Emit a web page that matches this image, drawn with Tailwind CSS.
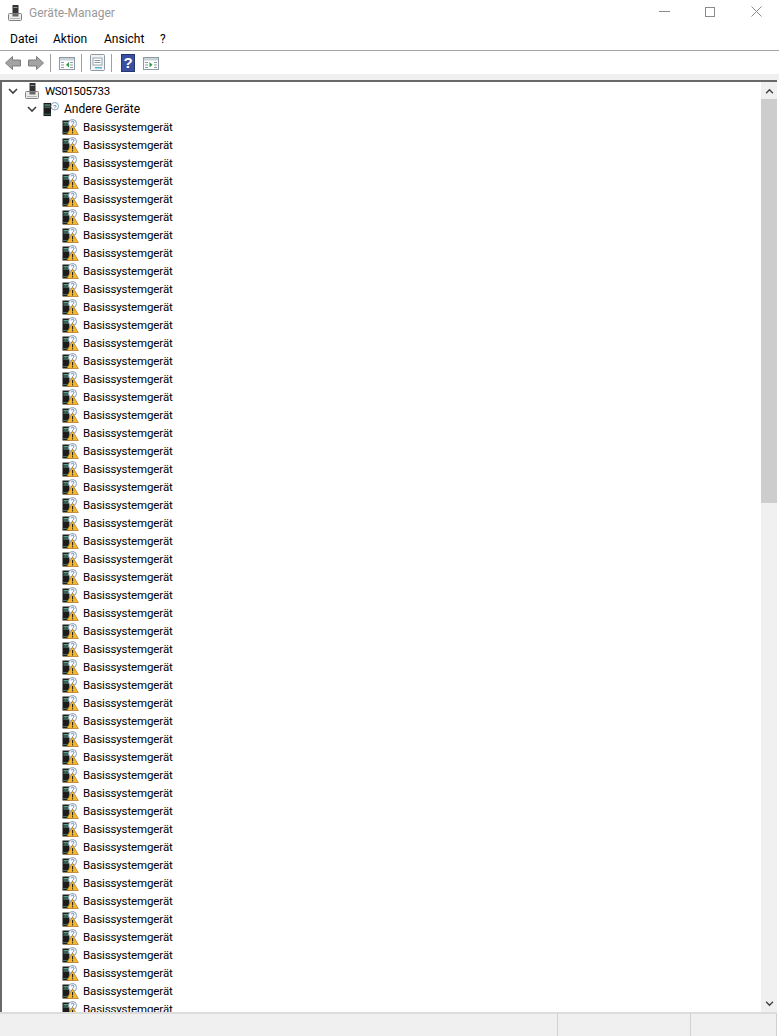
<!DOCTYPE html>
<html lang="de">
<head>
<meta charset="utf-8">
<title>Geräte-Manager</title>
<script src="https://cdn.jsdelivr.net/npm/@tailwindcss/browser@4"></script>
</head>
<body class="bg-white text-black overflow-hidden">

<svg class="hidden" width="0" height="0">
  <symbol id="pc" viewBox="0 0 14 16">
    <rect x="4.500" y="0" width="6" height="9" fill="#333"/>
    <rect x="5.500" y="2" width="4" height="1" fill="#999"/>
    <rect x="0.500" y="8.500" width="13" height="7" rx="1" fill="#ececec" stroke="#808080"/>
    <rect x="4.500" y="9" width="6" height="2.500" fill="#666"/>
    <rect x="2" y="13" width="10" height="1" fill="#b5b5b5"/>
  </symbol>
  <symbol id="other" viewBox="0 0 18 16">
    <rect x="0.500" y="1" width="8" height="14" fill="#1c1c1c"/>
    <rect x="1.500" y="2.500" width="6" height="1.500" fill="#5b9c84"/>
    <rect x="1.500" y="5" width="6" height="1" fill="#5b9c84"/>
    <rect x="0.500" y="12.500" width="8" height="1" fill="#3d6f5e"/>
    <circle cx="12.500" cy="4.500" r="4" fill="#fff" stroke="#7d9cb8"/>
    <text x="12.500" y="7" font-size="6.500" text-anchor="middle" fill="#3f6f9f" font-family="Liberation Sans">?</text>
  </symbol>
  <symbol id="warn" viewBox="0 0 17 16">
    <rect x="0.500" y="1.500" width="7" height="14" fill="#1c1c1c"/>
    <rect x="1.500" y="3" width="5" height="1.500" fill="#5b9c84"/>
    <rect x="1.500" y="5.500" width="5" height="1" fill="#5b9c84"/>
    <rect x="0.500" y="13" width="5" height="1" fill="#3d6f5e"/>
    <circle cx="10.500" cy="4.500" r="4" fill="#fff" stroke="#7d9cb8"/>
    <path d="M9.300 3.300a1.300 1.300 0 1 1 1.900 1.300l-.6.6v.7" fill="none" stroke="#3f6f9f" stroke-width=".9"/>
    <path d="M10.500 6L16.300 15.500H4.700Z" fill="#f5b82e" stroke="#a8701a" stroke-width=".7"/>
    <rect x="10" y="9" width="1.100" height="3.400" fill="#222"/>
    <rect x="10" y="13.200" width="1.100" height="1.200" fill="#222"/>
  </symbol>
  <symbol id="chev" viewBox="0 0 10 7">
    <path d="M1 1l4 4 4-4" fill="none" stroke="#404040" stroke-width="1.600"/>
  </symbol>
  <symbol id="pane" viewBox="0 0 16 13">
    <rect x="0.500" y="0.500" width="15" height="12" fill="#fff" stroke="#8d99a3"/>
    <rect x="1" y="1" width="14" height="2.500" fill="#c9d2d9"/>
    <rect x="2" y="5" width="3" height="1" fill="#8d99a3"/>
    <rect x="2" y="7.500" width="3" height="1" fill="#8d99a3"/>
    <rect x="2" y="10" width="3" height="1" fill="#8d99a3"/>
    <rect x="11" y="5" width="3" height="1" fill="#8d99a3"/>
    <rect x="11" y="7.500" width="3" height="1" fill="#8d99a3"/>
    <rect x="11" y="10" width="3" height="1" fill="#8d99a3"/>
  </symbol>
</svg>

<div class="h-[1036px] w-[779px] flex flex-col font-['Roboto',sans-serif] text-[12px] leading-[18px]">

  <!-- titlebar -->
  <div class="h-[27px] flex items-center shrink-0">
    <svg class="ml-[8px] w-[14px] h-[16px] mb-[2px]" viewBox="0 0 14 16"><use href="#pc"/></svg>
    <span class="ml-[7px] mb-[2px] text-[#999]">Geräte-Manager</span>
    <div class="ml-auto flex items-center mb-[4px]">
      <div class="w-[11px] h-px bg-[#8a8a8a] mr-[35px]"></div>
      <div class="w-[10px] h-[10px] border border-[#8a8a8a] mr-[36px]"></div>
      <svg class="w-[11px] h-[11px] mr-[17px]" viewBox="0 0 11 11"><path d="M.5.5l10 10M10.500.5l-10 10" stroke="#8a8a8a" fill="none"/></svg>
    </div>
  </div>

  <!-- menu -->
  <div class="h-[23px] flex items-center pl-[10px] shrink-0 border-b border-[#a5a5a5] box-content">
    <span class="w-[43px]">Datei</span><span class="w-[51px]">Aktion</span><span class="w-[56px]">Ansicht</span><span>?</span>
  </div>

  <!-- toolbar -->
  <div class="h-[23px] flex items-center shrink-0 pl-[5px]">
    <svg class="w-[16px] h-[14px]" viewBox="0 0 16 14"><path d="M.5 7L7.500.5V4H15.500V10H7.500V13.500Z" fill="#a3a3a3" stroke="#7c7c7c"/></svg>
    <svg class="ml-[7px] w-[16px] h-[14px]" viewBox="0 0 16 14"><path d="M15.500 7L8.500.5V4H.5V10H8.500V13.500Z" fill="#a3a3a3" stroke="#7c7c7c"/></svg>
    <div class="ml-[6px] w-px h-[18px] bg-[#a0a0a0]"></div>
    <svg class="ml-[8px] w-[16px] h-[13px] mt-[2px]" viewBox="0 0 16 13"><use href="#pane"/><path d="M10 5v5.500L7 7.800Z" fill="#2f9e44"/></svg>
    <div class="ml-[6px] w-px h-[18px] bg-[#a0a0a0]"></div>
    <svg class="ml-[8px] w-[15px] h-[17px]" viewBox="0 0 15 17">
      <rect x="0.500" y="0.500" width="14" height="16" rx="1" fill="#f1f3f4" stroke="#8d99a3"/>
      <rect x="3" y="4" width="9" height="7" fill="#fff" stroke="#9aa5ad"/>
      <rect x="4.500" y="6" width="6" height="1" fill="#8d99a3"/>
      <rect x="4.500" y="8" width="6" height="1" fill="#8d99a3"/>
      <rect x="5" y="13" width="7" height="1.500" fill="#59b7d6"/>
    </svg>
    <div class="ml-[6px] w-px h-[18px] bg-[#a0a0a0]"></div>
    <div class="ml-[9px] w-[14px] h-[18px] bg-[#3a4fa0] border border-[#26366e] flex items-center justify-center text-white font-bold text-[15px] font-['Liberation_Sans',sans-serif]">?</div>
    <svg class="ml-[8px] w-[16px] h-[13px] mt-[2px]" viewBox="0 0 16 13"><use href="#pane"/><path d="M6.500 5v5.500l3-2.700Z" fill="#2f9e44"/></svg>
  </div>

  <!-- light strip above tree -->
  <div class="h-[6px] bg-[#f0f0f0] shrink-0"></div>

  <!-- tree + scrollbar -->
  <div class="flex-1 min-h-0 flex mr-[2px] border-t-2 border-l-2 border-[#696969] relative">
    <div id="tree" class="flex-1 min-w-0 overflow-hidden bg-white">
      <div class="h-[18px] flex items-center">
        <svg class="ml-[6px] w-[10px] h-[7px]" viewBox="0 0 10 7"><use href="#chev"/></svg>
        <svg class="ml-[7px] w-[14px] h-[16px]" viewBox="0 0 14 16"><use href="#pc"/></svg>
        <span class="ml-[6px] text-[11.5px] tracking-[-0.4px]">WS01505733</span>
      </div>
      <div class="h-[18px] flex items-center">
        <svg class="ml-[25px] w-[10px] h-[7px]" viewBox="0 0 10 7"><use href="#chev"/></svg>
        <svg class="ml-[6px] w-[17px] h-[15px]" viewBox="0 0 18 16"><use href="#other"/></svg>
        <span class="ml-[4px]">Andere Geräte</span>
      </div>
      <div id="rows"></div>
    </div>
    <div class="w-[16px] shrink-0 bg-[#f0f0f0] flex flex-col items-center">
      <div class="h-[17px] shrink-0 flex items-center justify-center">
        <svg class="w-[9px] h-[6px] rotate-180" viewBox="0 0 10 7"><use href="#chev"/></svg>
      </div>
      <div class="h-[404px] w-full bg-[#cdcdcd] shrink-0"></div>
      <div class="flex-1"></div>
      <div class="h-[17px] shrink-0 flex items-center justify-center">
        <svg class="w-[9px] h-[6px]" viewBox="0 0 10 7"><use href="#chev"/></svg>
      </div>
    </div>
  </div>

  <!-- statusbar -->
  <div class="h-[24px] shrink-0 bg-[#f0f0f0] border-t-2 border-[#dcdcdc] flex mr-[2px]">
    <div class="w-[558px] border-r border-[#d0d0d0]"></div>
    <div class="w-[133px] border-r border-[#d0d0d0]"></div>
    <div class="flex-1 border-r border-[#d0d0d0]"></div>
  </div>
</div>

<script>
  const rows = document.getElementById('rows');
  for (let i = 0; i < 50; i++) {
    const row = document.createElement('div');
    row.className = 'h-[18px] flex items-center';
    row.innerHTML = `
      <svg class="ml-[60px] w-[17px] h-[16px]" viewBox="0 0 17 16"><use href="#warn"/></svg>
      <span class="ml-[4px] text-[11.5px] tracking-[-0.12px]">Basissystemgerät</span>`;
    rows.appendChild(row);
  }
</script>
</body>
</html>
